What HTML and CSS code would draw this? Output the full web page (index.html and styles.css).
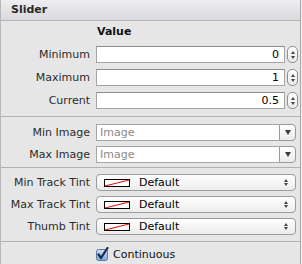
FILE: index.html
```html
<!DOCTYPE html>
<html>
<head>
<meta charset="utf-8">
<link rel="stylesheet" href="styles.css">
</head>
<body>
<div class="panel">
  <div class="header">Slider</div>

  <div class="section s1">
    <div class="title">Value</div>
    <div class="row">
      <div class="label">Minimum</div>
      <div class="field">0</div>
      <div class="stepper"><span class="up"></span><span class="down"></span></div>
    </div>
    <div class="row">
      <div class="label">Maximum</div>
      <div class="field">1</div>
      <div class="stepper"><span class="up"></span><span class="down"></span></div>
    </div>
    <div class="row">
      <div class="label">Current</div>
      <div class="field">0.5</div>
      <div class="stepper"><span class="up"></span><span class="down"></span></div>
    </div>
  </div>

  <div class="section s2">
    <div class="row">
      <div class="label">Min Image</div>
      <div class="combo"><div class="combo-text">Image</div><div class="combo-btn"><span class="tri"></span></div></div>
    </div>
    <div class="row">
      <div class="label">Max Image</div>
      <div class="combo"><div class="combo-text">Image</div><div class="combo-btn"><span class="tri"></span></div></div>
    </div>
  </div>

  <div class="section s3">
    <div class="row">
      <div class="label">Min Track Tint</div>
      <div class="popup">
        <svg class="swatch" width="26" height="8" viewBox="0 0 26 8"><rect x="0.5" y="0.5" width="25" height="7" fill="#fff" stroke="#000"/><line x1="1" y1="7" x2="25" y2="1" stroke="#e00" stroke-width="1"/></svg>
        <span class="ptext">Default</span>
        <span class="updown"><span class="up"></span><span class="down"></span></span>
      </div>
    </div>
    <div class="row">
      <div class="label">Max Track Tint</div>
      <div class="popup">
        <svg class="swatch" width="26" height="8" viewBox="0 0 26 8"><rect x="0.5" y="0.5" width="25" height="7" fill="#fff" stroke="#000"/><line x1="1" y1="7" x2="25" y2="1" stroke="#e00" stroke-width="1"/></svg>
        <span class="ptext">Default</span>
        <span class="updown"><span class="up"></span><span class="down"></span></span>
      </div>
    </div>
    <div class="row">
      <div class="label">Thumb Tint</div>
      <div class="popup">
        <svg class="swatch" width="26" height="8" viewBox="0 0 26 8"><rect x="0.5" y="0.5" width="25" height="7" fill="#fff" stroke="#000"/><line x1="1" y1="7" x2="25" y2="1" stroke="#e00" stroke-width="1"/></svg>
        <span class="ptext">Default</span>
        <span class="updown"><span class="up"></span><span class="down"></span></span>
      </div>
    </div>
  </div>

  <div class="section s4">
    <div class="check">
      <svg width="14" height="14" viewBox="0 0 14 14">
        <defs>
          <linearGradient id="cb" x1="0" y1="0" x2="0" y2="1">
            <stop offset="0" stop-color="#cfe0f5"/>
            <stop offset="1" stop-color="#7fa7dc"/>
          </linearGradient>
        </defs>
        <rect x="0.5" y="2.5" width="11" height="11" rx="2" fill="url(#cb)" stroke="#5a7aa6"/>
        <path d="M2.5 7.5 L5 11 L11.5 1" fill="none" stroke="#1b2a48" stroke-width="2.2" stroke-linecap="round" stroke-linejoin="round"/>
      </svg>
      <span class="ctext">Continuous</span>
    </div>
  </div>
</div>
</body>
</html>
```

FILE: styles.css
```css
html, body {
  margin: 0;
  padding: 0;
  background: #ededed;
}
body {
  font-family: "DejaVu Sans", Verdana, sans-serif;
  font-size: 11px;
  color: #222;
}
.panel {
  width: 299px;
  height: 264px;
  background: #e6e6e6;
  border-left: 1px solid #b8b8b8;
  border-right: 1px solid #a8a8a8;
  box-sizing: content-box;
}
.header {
  height: 20px;
  line-height: 20px;
  padding-left: 10px;
  font-weight: bold;
  color: #2a2a2a;
  background: linear-gradient(#eeeef1, #d9d9de);
  border-bottom: 1px solid #b3b3b3;
}
.section {
  display: flex;
  flex-direction: column;
  border-bottom: 1px solid #b0b0b0;
}
.s1 { padding: 4px 0 7px; gap: 6px; }
.s2 { padding: 7px 0 4px; gap: 5px; }
.s3 { padding: 6px 0 6px; gap: 5px; }
.s4 { border-bottom: none; padding-top: 3px; }
.title {
  height: 14px;
  line-height: 14px;
  padding-left: 96px;
  font-weight: bold;
  color: #111;
  margin-bottom: 1px;
}
.row {
  display: flex;
  align-items: center;
  height: 17px;
}
.label {
  width: 89px;
  padding-right: 6px;
  text-align: right;
  white-space: nowrap;
  color: #2b2b2b;
}
.field {
  box-sizing: border-box;
  width: 189px;
  height: 17px;
  line-height: 15px;
  background: #fff;
  border: 1px solid #a4a4a4;
  border-top-color: #8c8c8c;
  text-align: right;
  padding-right: 5px;
  color: #000;
}
.stepper {
  box-sizing: border-box;
  margin-left: 2px;
  width: 11px;
  height: 17px;
  border: 1px solid #8e8e8e;
  border-radius: 5px;
  background: linear-gradient(#ffffff, #e9e9e9);
  display: flex;
  flex-direction: column;
  align-items: center;
  justify-content: center;
  gap: 2px;
}
.up {
  width: 0; height: 0;
  border-left: 2px solid transparent;
  border-right: 2px solid transparent;
  border-bottom: 3px solid #444;
}
.down {
  width: 0; height: 0;
  border-left: 2px solid transparent;
  border-right: 2px solid transparent;
  border-top: 3px solid #444;
}
.combo {
  display: flex;
  width: 200px;
  height: 17px;
}
.combo-text {
  box-sizing: border-box;
  flex: 1;
  height: 17px;
  line-height: 15px;
  background: #fff;
  border: 1px solid #a4a4a4;
  border-right: none;
  padding-left: 3px;
  color: #8a8a8a;
}
.combo-btn {
  box-sizing: border-box;
  width: 17px;
  height: 17px;
  border: 1px solid #9a9a9a;
  border-radius: 0 4px 4px 0;
  background: linear-gradient(#ffffff, #ebebeb);
  display: flex;
  align-items: center;
  justify-content: center;
}
.tri {
  width: 0; height: 0;
  border-left: 3.5px solid transparent;
  border-right: 3.5px solid transparent;
  border-top: 5px solid #3a3a3a;
  margin-left: 1px;
}
.popup {
  box-sizing: border-box;
  width: 200px;
  height: 17px;
  border: 1px solid #9c9c9c;
  border-radius: 4px;
  background: linear-gradient(#ffffff, #ececec);
  display: flex;
  align-items: center;
  padding-left: 7px;
  color: #000;
}
.swatch {
  display: block;
  flex: none;
}
.ptext {
  margin-left: 9px;
  flex: 1;
}
.updown {
  display: flex;
  flex-direction: column;
  align-items: center;
  gap: 1px;
  margin-right: 7px;
}
.check {
  display: flex;
  align-items: center;
  padding-left: 95px;
  height: 18px;
}
.check svg { display: block; }
.ctext {
  margin-left: 3px;
  color: #111;
}
```
